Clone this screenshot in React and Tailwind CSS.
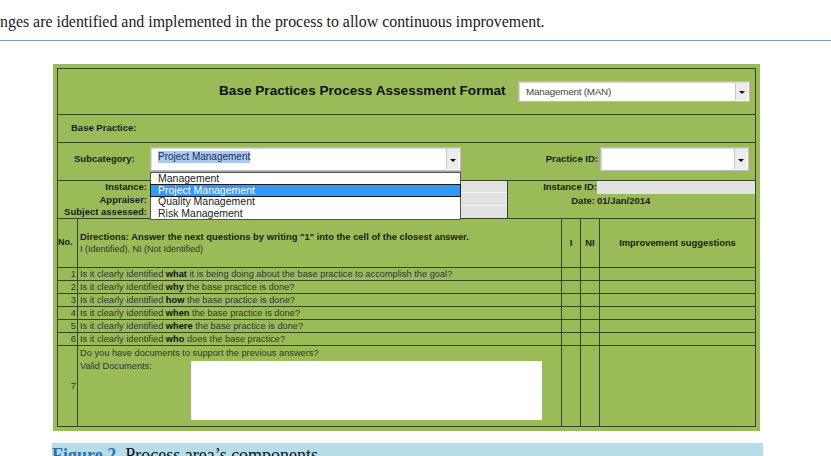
import React from 'react';

const line = 'border-[#2f4a22]';

function Arrow() {
  return (
    <div className="flex h-full w-[13px] items-center justify-center border-l border-[#c8c8c8] bg-[#ececec]">
      <svg width="6" height="6" viewBox="0 0 6 6" className="mt-[3px]">
        <path d="M0 1h6L3 4z" fill="#111" />
      </svg>
    </div>
  );
}

function SelectBox({ width, height, top, children }) {
  return (
    <div
      className="flex items-stretch border border-[#bdbdbd] bg-white shadow-[inset_1px_1px_0_#d8d8d8]"
      style={{ width, height }}
    >
      <div className={`flex flex-1 overflow-hidden pl-[7px] ${top ? 'items-start pt-[3px]' : 'items-center'}`}>
        {children}
      </div>
      <div className="flex items-center py-[1px] pr-[1px]">
        <Arrow />
      </div>
    </div>
  );
}

export default function App() {
  const questions = [
    ['what', ' it is being doing about the base practice to accomplish the goal?'],
    ['why', ' the base practice is done?'],
    ['how', ' the base practice is done?'],
    ['when', ' the base practice is done?'],
    ['where', ' the base practice is done?'],
    ['who', ' does the base practice?'],
  ];
  const options = ['Management', 'Project Management', 'Quality Management', 'Risk Management'];

  return (
    <div className="h-[456px] w-[831px] overflow-hidden bg-white font-['Liberation_Sans',Arial,sans-serif]">
      <div className="h-[41px] border-b border-[#6ea3b6] pt-[13px] font-['Liberation_Serif','Times_New_Roman',serif] text-[15.9px] leading-[18px] text-[#1a1a1a]">
        nges are identified and implemented in the process to allow continuous improvement.
      </div>

      <div className="ml-[53px] mt-[23px] h-[367px] w-[707px] bg-[#9bbb59] p-[4px]">
        <div className={`flex h-full flex-col border ${line} text-[#1c1c1c]`}>
          {/* header */}
          <div className={`flex h-[46px] items-center border-b ${line}`}>
            <div className="ml-[161px] w-[287px] whitespace-nowrap text-[13.6px] font-bold text-[#111]">
              Base Practices Process Assessment Format
            </div>
            <div className="ml-[12px]">
              <SelectBox width={232} height={21}>
                <span className="text-[9.8px] leading-[11px] tracking-[-0.2px] text-[#444]">Management (MAN)</span>
              </SelectBox>
            </div>
          </div>

          {/* base practice */}
          <div className={`flex h-[28px] items-center border-b ${line} pl-[13px] text-[9.5px] font-bold`}>
            Base Practice:
          </div>

          {/* subcategory */}
          <div className={`flex h-[38px] items-start border-b ${line} pt-[4px]`}>
            <div className="flex h-[24px] w-[92px] items-center pl-[16px] text-[9.5px] font-bold">Subcategory:</div>
            <div className="relative">
              <SelectBox width={311} height={24} top>
                <span className="bg-[#a9cbef] text-[10px] leading-[12px] text-[#1b2a6b]">Project Management</span>
              </SelectBox>
              <div className="absolute left-0 top-[25px] z-10 w-[311px] border border-[#555] bg-white text-[10.5px] text-[#222]">
                {options.map((o, i) => (
                  <div
                    key={o}
                    className={`h-[11.5px] pl-[7px] leading-[11.5px] ${
                      i === 1 ? 'bg-[#3399ff] text-white outline outline-1 outline-[#1a1a1a]' : ''
                    }`}
                  >
                    {o}
                  </div>
                ))}
              </div>
            </div>
            <div className="flex h-[24px] flex-1 items-center justify-end pr-[6px]">
              <span className="mr-[2px] text-[9.5px] font-bold">Practice ID:</span>
              <SelectBox width={149} height={24}>
                <span />
              </SelectBox>
            </div>
          </div>

          {/* instance */}
          <div className={`flex h-[38px] border-b ${line} text-[9.5px] font-bold`}>
            <div className="flex w-[92px] flex-col pr-[3px] text-right">
              <div className="h-[12.5px] whitespace-nowrap leading-[12.5px]">Instance:</div>
              <div className="h-[12.5px] whitespace-nowrap leading-[12.5px]">Appraiser:</div>
              <div className="h-[12.5px] whitespace-nowrap leading-[12.5px]">Subject assessed:</div>
            </div>
            <div className={`flex w-[358px] flex-col border-r ${line}`}>
              <div className="h-[12.5px] border-b border-[#f4f4f4] bg-[#e2e2e2]" />
              <div className="h-[12.5px] border-b border-[#f4f4f4] bg-[#e2e2e2]" />
              <div className="h-[12.5px] bg-[#e2e2e2]" />
            </div>
            <div className="flex flex-1 flex-col">
              <div className="flex h-[12.5px]">
                <div className="w-[89px] whitespace-nowrap text-right leading-[12.5px]">Instance ID:</div>
                <div className="flex-1 bg-[#e2e2e2]" />
              </div>
              <div className="flex h-[13px]">
                <div className="w-[89px] pr-[2px] text-right leading-[13px]">Date:</div>
                <div className="leading-[13px]">01/Jan/2014</div>
              </div>
            </div>
          </div>

          {/* directions header */}
          <div className={`grid h-[49px] grid-cols-[20px_484px_19px_19px_1fr] border-b ${line}`}>
            <div className={`flex items-center border-r ${line} text-[9px] font-bold`}>No.</div>
            <div className={`flex flex-col justify-center border-r ${line} pl-[2px] leading-[12px]`}>
              <div className="whitespace-nowrap text-[9.4px] font-bold">
                Directions: Answer the next questions by writing "1" into the cell of the closest answer.
              </div>
              <div className="text-[9px] text-[#333]">I (Identified), NI (Not Identified)</div>
            </div>
            <div className={`flex items-center justify-center border-r ${line} text-[9.4px] font-bold`}>I</div>
            <div className={`flex items-center justify-center border-r ${line} text-[9.4px] font-bold`}>NI</div>
            <div className="flex items-center justify-center whitespace-nowrap text-[9.4px] font-bold">
              Improvement suggestions
            </div>
          </div>

          {/* questions */}
          {questions.map(([b, rest], i) => (
            <div
              key={b}
              className={`grid h-[13px] grid-cols-[20px_484px_19px_19px_1fr] border-b ${line} text-[9.25px] leading-[12px] text-[#333]`}
            >
              <div className={`border-r ${line} pr-[1px] text-right`}>{i + 1}</div>
              <div className={`whitespace-nowrap border-r ${line} pl-[2px]`}>
                Is it clearly identified <b className="text-[#111]">{b}</b>
                {rest}
              </div>
              <div className={`border-r ${line}`} />
              <div className={`border-r ${line}`} />
              <div />
            </div>
          ))}

          {/* row 7 */}
          <div className="grid flex-1 grid-cols-[20px_484px_19px_19px_1fr] text-[9.25px] leading-[12px] text-[#333]">
            <div className={`flex items-center justify-end border-r ${line} pr-[1px]`}>7</div>
            <div className={`border-r ${line} pl-[2px] pt-[1px]`}>
              <div>Do you have documents to support the previous answers?</div>
              <div className="flex">
                <div className="w-[111px] pt-[1px]">Valid Documents:</div>
                <div className="mt-[2px] h-[59px] w-[351px] bg-white" />
              </div>
            </div>
            <div className={`border-r ${line}`} />
            <div className={`border-r ${line}`} />
            <div />
          </div>
        </div>
      </div>

      <div className="ml-[52px] mt-[12px] h-[20px] w-[711px] bg-[#b7dde9] pt-[3px] font-['Liberation_Serif','Times_New_Roman',serif] text-[18px] leading-[18px] text-[#111]">
        <span className="font-bold text-[#2a6fb0]">Figure 2.</span> Process area’s components
      </div>
    </div>
  );
}
